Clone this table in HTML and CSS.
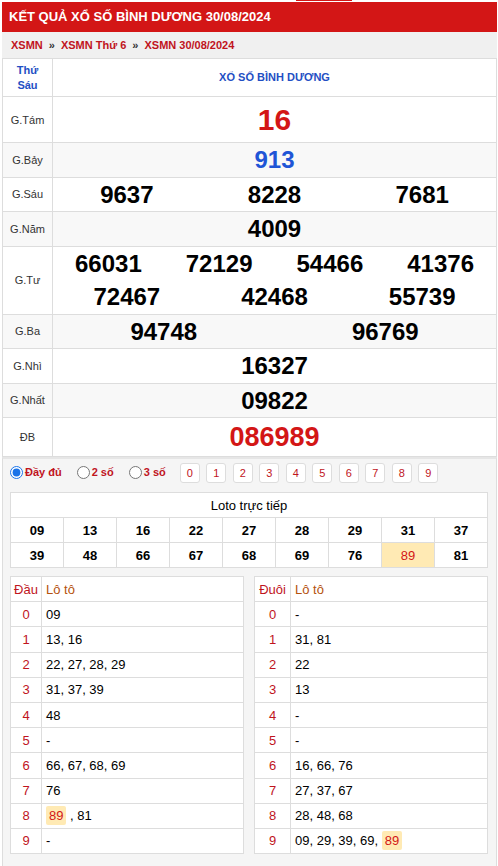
FILE: index.html
```html
<!DOCTYPE html>
<html lang="vi">
<head>
<meta charset="utf-8">
<title>KẾT QUẢ XỔ SỐ BÌNH DƯƠNG 30/08/2024</title>
<link rel="stylesheet" href="styles.css">
</head>
<body>
<div class="topnav"><span class="topnav-active"></span></div>
<div class="wrap">
  <h1 class="title">KẾT QUẢ XỔ SỐ BÌNH DƯƠNG 30/08/2024</h1>
  <div class="crumbs">
    <a class="crumb">XSMN</a><span class="sep">»</span><a class="crumb">XSMN Thứ 6</a><span class="sep">»</span><a class="crumb">XSMN 30/08/2024</a>
  </div>
  <table class="kq">
    <tr class="kq-head">
      <th class="lbl day"><div class="hd">Thứ<br>Sáu</div></th>
      <th class="prov"><div class="hd">XỔ SỐ BÌNH DƯƠNG</div></th>
    </tr>
    <tr class="r-g8">
      <td class="lbl">G.Tám</td>
      <td><div class="nums"><span class="n g8">16</span></div></td>
    </tr>
    <tr>
      <td class="lbl">G.Bảy</td>
      <td><div class="nums"><span class="n g7">913</span></div></td>
    </tr>
    <tr>
      <td class="lbl">G.Sáu</td>
      <td><div class="nums"><span class="n">9637</span><span class="n">8228</span><span class="n">7681</span></div></td>
    </tr>
    <tr>
      <td class="lbl">G.Năm</td>
      <td><div class="nums"><span class="n">4009</span></div></td>
    </tr>
    <tr>
      <td class="lbl">G.Tư</td>
      <td>
        <div class="nums"><span class="n">66031</span><span class="n">72129</span><span class="n">54466</span><span class="n">41376</span></div>
        <div class="nums"><span class="n">72467</span><span class="n">42468</span><span class="n">55739</span></div>
      </td>
    </tr>
    <tr>
      <td class="lbl">G.Ba</td>
      <td><div class="nums"><span class="n">94748</span><span class="n">96769</span></div></td>
    </tr>
    <tr>
      <td class="lbl">G.Nhì</td>
      <td><div class="nums"><span class="n">16327</span></div></td>
    </tr>
    <tr>
      <td class="lbl">G.Nhất</td>
      <td><div class="nums"><span class="n">09822</span></div></td>
    </tr>
    <tr>
      <td class="lbl">ĐB</td>
      <td><div class="nums"><span class="n db">086989</span></div></td>
    </tr>
  </table>

  <div class="loto-area">
    <div class="filters">
      <label class="opt"><input type="radio" name="mode" checked>Đầy đủ</label>
      <label class="opt"><input type="radio" name="mode">2 số</label>
      <label class="opt"><input type="radio" name="mode">3 số</label>
      <div class="digits">
        <span class="dg">0</span><span class="dg">1</span><span class="dg">2</span><span class="dg">3</span><span class="dg">4</span><span class="dg">5</span><span class="dg">6</span><span class="dg">7</span><span class="dg">8</span><span class="dg">9</span>
      </div>
    </div>

    <table class="live">
      <tr><th colspan="9">Loto trực tiếp</th></tr>
      <tr><td>09</td><td>13</td><td>16</td><td>22</td><td>27</td><td>28</td><td>29</td><td>31</td><td>37</td></tr>
      <tr><td>39</td><td>48</td><td>66</td><td>67</td><td>68</td><td>69</td><td>76</td><td class="hit">89</td><td>81</td></tr>
    </table>

    <div class="dd">
      <table class="ht">
        <tr><th class="k">Đầu</th><th class="v">Lô tô</th></tr>
        <tr><td class="k">0</td><td class="v">09</td></tr>
        <tr><td class="k">1</td><td class="v">13, 16</td></tr>
        <tr><td class="k">2</td><td class="v">22, 27, 28, 29</td></tr>
        <tr><td class="k">3</td><td class="v">31, 37, 39</td></tr>
        <tr><td class="k">4</td><td class="v">48</td></tr>
        <tr><td class="k">5</td><td class="v">-</td></tr>
        <tr><td class="k">6</td><td class="v">66, 67, 68, 69</td></tr>
        <tr><td class="k">7</td><td class="v">76</td></tr>
        <tr><td class="k">8</td><td class="v"><span class="mark">89</span> , 81</td></tr>
        <tr><td class="k">9</td><td class="v">-</td></tr>
      </table>
      <table class="ht tail">
        <tr><th class="k">Đuôi</th><th class="v">Lô tô</th></tr>
        <tr><td class="k">0</td><td class="v">-</td></tr>
        <tr><td class="k">1</td><td class="v">31, 81</td></tr>
        <tr><td class="k">2</td><td class="v">22</td></tr>
        <tr><td class="k">3</td><td class="v">13</td></tr>
        <tr><td class="k">4</td><td class="v">-</td></tr>
        <tr><td class="k">5</td><td class="v">-</td></tr>
        <tr><td class="k">6</td><td class="v">16, 66, 76</td></tr>
        <tr><td class="k">7</td><td class="v">27, 37, 67</td></tr>
        <tr><td class="k">8</td><td class="v">28, 48, 68</td></tr>
        <tr><td class="k">9</td><td class="v">09, 29, 39, 69, <span class="mark">89</span></td></tr>
      </table>
    </div>
  </div>
</div>
</body>
</html>
```

FILE: styles.css
```css
* { box-sizing: border-box; }
html, body { margin: 0; padding: 0; background: #fff; }
body {
  font-family: "Liberation Sans", Arial, sans-serif;
  color: #000;
  width: 498px;
  overflow: hidden;
}
.topnav { height: 2px; display: flex; }
.topnav-active { display: block; margin-left: 296px; width: 56px; height: 1px; background: #d31616; }

.wrap { margin-left: 2px; width: 495px; }

.title {
  margin: 0;
  height: 30px;
  line-height: 30px;
  background: #d31616;
  color: #fff;
  font-size: 13px;
  font-weight: bold;
  padding-left: 7px;
  white-space: nowrap;
}
.crumbs {
  height: 26px;
  line-height: 26px;
  background: #f0f0f0;
  padding-left: 9px;
  font-size: 11px;
  font-weight: bold;
}
.crumb { color: #c0141d; text-decoration: none; }
.sep { color: #333; margin: 0 6px; }

.kq {
  width: 100%;
  border-collapse: collapse;
  table-layout: fixed;
}
.kq td, .kq th {
  border: 1px solid #ddd;
  padding: 0;
  text-align: center;
  vertical-align: middle;
}
.kq tr:nth-child(odd) { background: #f8f8f8; }
.kq tr.kq-head, .kq tr.r-g8 { background: #fff; }
.kq tr:nth-child(3) { background: #f8f8f8; }
.kq .lbl {
  width: 50px;
  font-size: 11px;
  font-weight: normal;
  color: #333;
}
.kq th.day, .kq th.prov {
  color: #1f4fc4;
  font-weight: bold;
  font-size: 11px;
  line-height: 15px;
}
.hd {
  height: 37px;
  display: flex;
  align-items: center;
  justify-content: center;
}
.nums { display: flex; }
.n {
  flex: 1;
  text-align: center;
  font-size: 24px;
  font-weight: bold;
  line-height: 33.5px;
  height: 33.5px;
  color: #000;
}
.n.g8 { font-size: 30px; color: #d31616; line-height: 45px; height: 45px; }
.n.g7 { color: #1f55d6; }
.n.db { font-size: 27px; color: #d31616; line-height: 38px; height: 38px; }

.loto-area {
  background: #f5f5f5;
  border-left: 1px solid #ddd;
  border-right: 1px solid #ddd;
  border-top: 2px solid #e6e6e6;
  padding: 2px 8px 12px 7px;
}
.filters {
  display: flex;
  align-items: center;
  height: 24px;
  font-size: 11px;
  font-weight: bold;
  color: #c0141d;
}
.opt { display: flex; align-items: center; margin-right: 15px; white-space: nowrap; position: relative; top: -1px; }
.opt:nth-child(3) { margin-right: 14px; }
.opt input { margin: 0 2px 0 0; width: 13px; height: 13px; accent-color: #1a73e8; }
.digits { display: flex; gap: 6.5px; }
.dg {
  width: 20px;
  height: 20px;
  border: 1px solid #ddd;
  border-radius: 3px;
  background: #fff;
  color: #c0141d;
  font-size: 11px;
  font-weight: normal;
  display: flex;
  align-items: center;
  justify-content: center;
}

.live {
  margin-top: 7px;
  width: 100%;
  border-collapse: collapse;
  table-layout: fixed;
  background: #fff;
}
.live th, .live td {
  border: 1px solid #ddd;
  height: 25px;
  padding: 0;
  text-align: center;
  font-size: 13px;
}
.live th { font-weight: normal; }
.live td { font-weight: bold; }
.live td.hit { background: #ffeab4; color: #d31616; font-weight: normal; }

.dd {
  margin-top: 8px;
  display: grid;
  grid-template-columns: 1fr 1fr;
  gap: 10px;
}
.ht {
  width: 100%;
  border-collapse: collapse;
  background: #fff;
  font-size: 13px;
}
.ht th, .ht td {
  border: 1px solid #ddd;
  height: 25.2px;
  padding: 0 4px;
  text-align: left;
}
.ht .k { width: 31px; text-align: center; color: #c0141d; padding: 0; }
.ht.tail .k { width: 36px; }
.ht th { font-weight: normal; }
.ht th.v { color: #b5520e; }
.ht td.v { color: #000; }
.mark {
  display: inline-block;
  background: #ffeab4;
  color: #d31616;
  border-radius: 2px;
  padding: 2px 3px;
  line-height: 15px;
}
```
